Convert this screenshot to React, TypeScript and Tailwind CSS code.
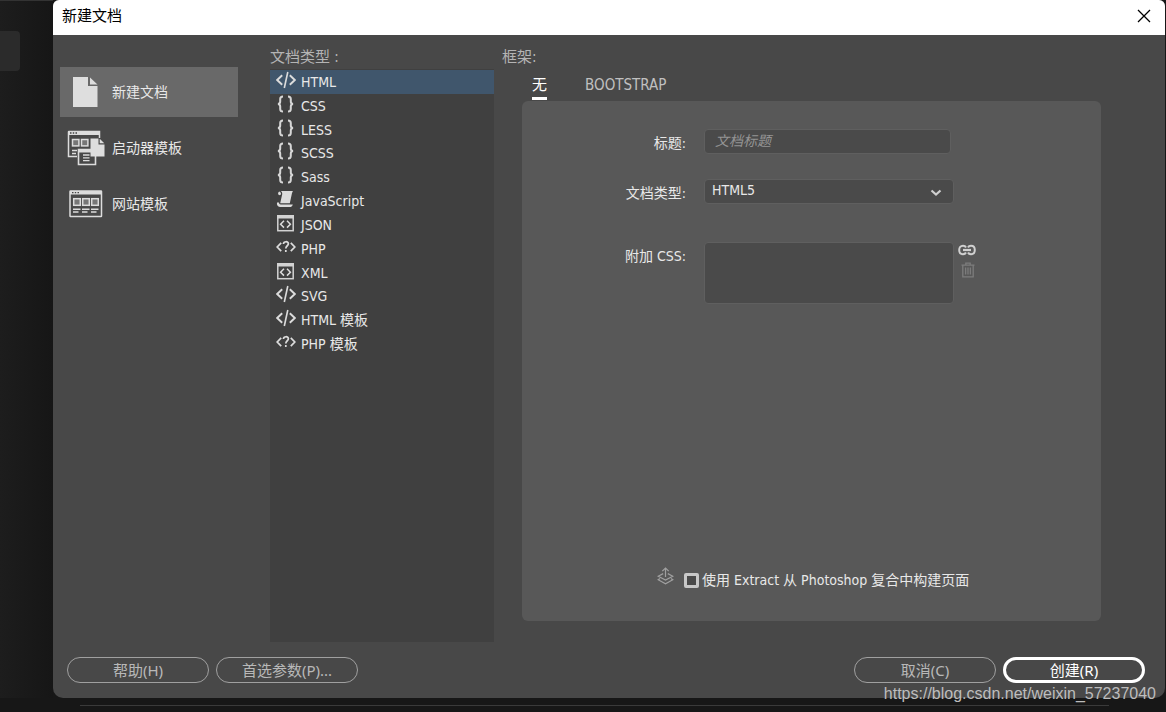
import React, { useState } from "react";

type IconProps = { className?: string };

const DocIcon = () => (
  <svg width="26" height="31" viewBox="0 0 26 31" fill="#dedede" aria-hidden="true">
    <path d="M0 0H15V9H24.5V30H0Z" />
    <path d="M17 0.5L24.5 7.5H17Z" />
  </svg>
);

const StarterIcon = () => (
  <svg width="38" height="36" viewBox="0 0 38 36" fill="none" aria-hidden="true">
    <path d="M1.5 1.5H32.5V8M1.5 1.5V26.5H10" stroke="#dcdcdc" strokeWidth="1.5" />
    <path d="M1 1H33V5H1Z" fill="#dcdcdc" />
    <path d="M3 3H4.5M5.8 3H7.2M8.5 3H10" stroke="#444" strokeWidth="1.4" />
    <rect x="5.5" y="9.5" width="6.4" height="6.4" fill="#777" stroke="#dcdcdc" strokeWidth="1.5" />
    <rect x="14.5" y="9.5" width="6.4" height="6.4" fill="#777" stroke="#dcdcdc" strokeWidth="1.5" />
    <path d="M5 20.5H10M5 23.5H9" stroke="#dcdcdc" strokeWidth="1.3" />
    <path d="M11.5 19.5H28.5V34.5H11.5Z" fill="#484848" stroke="#dcdcdc" strokeWidth="1.6" />
    <path d="M11 19H24V22.5H11Z" fill="#dcdcdc" />
    <path d="M16 25H22.5M16 27.8H22.5M16 30.6H22.5" stroke="#dcdcdc" strokeWidth="1.3" />
    <path d="M23.5 8.5H31.5V14.5H37.5V26.5H23.5Z" fill="#dedede" />
    <path d="M32.7 8.7L37.3 13.3H32.7Z" fill="#dedede" />
  </svg>
);

const SiteIcon = () => (
  <svg width="34" height="28" viewBox="0 0 34 28" fill="none" aria-hidden="true">
    <rect x="1" y="1" width="31.5" height="25.5" rx="0.5" stroke="#dcdcdc" strokeWidth="1.5" />
    <path d="M1 1H33V4.5H1Z" fill="#dcdcdc" />
    <path d="M3 2.6H4.5M5.8 2.6H7.2M8.5 2.6H10" stroke="#444" strokeWidth="1.4" />
    <g fill="#777" stroke="#dcdcdc" strokeWidth="1.5">
      <rect x="4.7" y="8.7" width="6.6" height="6.6" />
      <rect x="13.7" y="8.7" width="6.6" height="6.6" />
      <rect x="22.7" y="8.7" width="6.6" height="6.6" />
    </g>
    <path d="M4 19.2H11.5M13 19.2H20.5M22 19.2H29.5M4 22H9.5M13 22H18.5M22 22H27.5" stroke="#dcdcdc" strokeWidth="1.4" />
  </svg>
);

const TagIcon = () => (
  <svg width="20" height="18" viewBox="0 0 20 18" fill="none" stroke="#dcdcdc" strokeWidth="1.9" aria-hidden="true">
    <path d="M6.2 4.2L1.2 9L6.2 13.8M13.8 4.2L18.8 9L13.8 13.8" />
    <path d="M11.8 1L8.3 17" strokeWidth="1.6" />
  </svg>
);

const BraceIcon = () => (
  <svg width="20" height="18" viewBox="0 0 20 18" fill="none" stroke="#d6d6d6" strokeWidth="2" aria-hidden="true">
    <path d="M7 1.5C4.9 1.5 4.2 2 4.2 4V6.4C4.2 8 3.5 8.8 2 9C3.5 9.2 4.2 10 4.2 11.6V14C4.2 16 4.9 16.5 7 16.5" />
    <path d="M12 1.5C14.1 1.5 14.8 2 14.8 4V6.4C14.8 8 15.5 8.8 17 9C15.5 9.2 14.8 10 14.8 11.6V14C14.8 16 14.1 16.5 12 16.5" />
  </svg>
);

const ScriptIcon = () => (
  <svg width="20" height="18" viewBox="0 0 20 18" fill="#dcdcdc" aria-hidden="true">
    <path d="M4.6 1H17C16.2 2 16 3.2 15.7 4.5L13.8 13.2H4.2L6.2 4.2C6.4 2.8 5.8 1.6 4.6 1Z" />
    <path d="M3.2 1.4C1.6 2.4 1.8 4.4 3.2 5.2L5 4.6C5.2 3.2 4.6 1.8 3.2 1.4Z" />
    <path d="M1 12.6H3C3 13.9 3.6 14.4 4.8 14.4H16.8C16.2 16.2 15.2 17 13.6 17H4C1.6 17 0.6 15 1 12.6Z" />
  </svg>
);

const BoxIcon = () => (
  <svg width="20" height="18" viewBox="0 0 20 18" fill="none" aria-hidden="true">
    <rect x="1.8" y="1.8" width="15.4" height="14.9" stroke="#d2d2d2" strokeWidth="1.5" />
    <path d="M1 1H18V4.5H1Z" fill="#d2d2d2" />
    <path d="M8 6.8L4.6 10.2L8 13.6M11 6.8L14.4 10.2L11 13.6" stroke="#dcdcdc" strokeWidth="1.5" />
  </svg>
);

const PhpIcon = () => (
  <svg width="20" height="18" viewBox="0 0 20 18" fill="none" stroke="#dcdcdc" strokeWidth="1.7" aria-hidden="true">
    <path d="M5.2 4.8L1.2 9L5.2 13.2M14.8 4.8L18.8 9L14.8 13.2" />
    <path d="M7.4 6C7.6 3 12.4 3 12.4 5.8C12.4 7.8 9.8 7.8 9.8 10.6M9.8 12.1V14" />
  </svg>
);

const LinkIcon = () => (
  <svg width="18" height="12" viewBox="0 0 18 12" fill="none" stroke="#d0d0d0" strokeWidth="2" aria-hidden="true">
    <path d="M8 3.5C7.4 2.2 6.6 1.8 5 1.8C2.6 1.8 1.2 3.6 1.2 6C1.2 8.4 2.6 10.2 5 10.2C6.6 10.2 7.4 9.8 8 8.5M10 3.5C10.6 2.2 11.4 1.8 13 1.8C15.4 1.8 16.8 3.6 16.8 6C16.8 8.4 15.4 10.2 13 10.2C11.4 10.2 10.6 9.8 10 8.5" />
    <path d="M5 6H13" strokeWidth="2.2" />
  </svg>
);

const TrashIcon = () => (
  <svg width="14" height="16" viewBox="0 0 14 16" fill="none" stroke="#7c7c7c" strokeWidth="1.3" aria-hidden="true">
    <path d="M0.5 3.2H13.5M4.8 3V1.2H9.2V3M1.8 3.5V14.8H12.2V3.5M4.6 5.5V12.5M7 5.5V12.5M9.4 5.5V12.5" />
  </svg>
);

const ExtractIcon = () => (
  <svg width="17" height="18" viewBox="0 0 17 18" fill="none" stroke="#a0a0a0" strokeWidth="1.2" aria-hidden="true">
    <path d="M8.5 10V1.2M5.3 4.2L8.5 1L11.7 4.2" />
    <path d="M6.2 6.6L1.2 9.2L8.5 13L15.8 9.2L10.8 6.6M3 11.6L1.2 12.8L8.5 16.8L15.8 12.8L14 11.6" />
  </svg>
);

const sections: { name: string; Icon: React.FC<IconProps> }[] = [
  { name: "新建文档", Icon: DocIcon },
  { name: "启动器模板", Icon: StarterIcon },
  { name: "网站模板", Icon: SiteIcon },
];

const docTypes: { name: string; Icon: React.FC<IconProps> }[] = [
  { name: "HTML", Icon: TagIcon },
  { name: "CSS", Icon: BraceIcon },
  { name: "LESS", Icon: BraceIcon },
  { name: "SCSS", Icon: BraceIcon },
  { name: "Sass", Icon: BraceIcon },
  { name: "JavaScript", Icon: ScriptIcon },
  { name: "JSON", Icon: BoxIcon },
  { name: "PHP", Icon: PhpIcon },
  { name: "XML", Icon: BoxIcon },
  { name: "SVG", Icon: TagIcon },
  { name: "HTML 模板", Icon: TagIcon },
  { name: "PHP 模板", Icon: PhpIcon },
];

const pill = "flex h-[26px] w-[142px] items-center justify-center rounded-full text-[15px] leading-5 font-['Noto_Sans','Noto_Sans_CJK_SC',sans-serif]";

export default function App() {
  const [section, setSection] = useState(0);
  const [docType, setDocType] = useState(0);
  const [tab, setTab] = useState(0);

  return (
    <div className="relative flex min-h-screen flex-col bg-[#171717] pr-px font-['DejaVu_Sans_Condensed','Noto_Sans_CJK_SC',sans-serif] text-sm text-[#e8e8e8]">
      <div className="flex flex-1">
        <div className="w-[53px] shrink-0 border-t border-[#333] bg-linear-to-r from-[#1d1d1d] to-[#161616] pt-[30px]">
          <div className="h-10 w-5 rounded-r bg-[#2b2b2b]" />
        </div>

        <div className="flex min-w-0 flex-1 flex-col overflow-hidden rounded-t-md rounded-b-[10px] bg-[#484848]">
          <header className="flex h-[35px] shrink-0 items-center justify-between bg-white pr-3.5 pb-[3px] pl-[9px] text-black">
            <h1 className="text-[15px] leading-5">新建文档</h1>
            <button aria-label="关闭">
              <svg width="14" height="14" viewBox="0 0 14 14" stroke="#000" strokeWidth="1.3" aria-hidden="true">
                <path d="M1 1L13 13M13 1L1 13" />
              </svg>
            </button>
          </header>

          <main className="flex flex-1">
            <nav className="flex w-[217px] shrink-0 flex-col gap-1.5 pt-8 pr-8 pl-[7px]">
              {sections.map(({ name, Icon }, i) => (
                <button
                  key={name}
                  onClick={() => setSection(i)}
                  className={`flex h-[50px] items-center text-left ${i === section ? "bg-[#696969]" : ""}`}
                >
                  <span className="flex w-[52px] justify-center">
                    <Icon />
                  </span>
                  {name}
                </button>
              ))}
            </nav>

            <section className="flex w-[224px] shrink-0 flex-col pt-3">
              <h2 className="h-[22px] text-[15px] leading-5 text-[#b4b4b4]">文档类型 :</h2>
              <div className="flex-1 bg-[#404040] pt-px">
                <ul className="grid h-[286px] auto-rows-fr">
                  {docTypes.map(({ name, Icon }, i) => (
                    <li key={name} className="flex">
                      <button
                        onClick={() => setDocType(i)}
                        className={`flex w-full items-center pl-1.5 text-left ${i === docType ? "bg-[#40566c]" : ""}`}
                      >
                        <span className="pb-1">
                          <Icon />
                        </span>
                        <span className="pl-[5px] leading-5">{name}</span>
                      </button>
                    </li>
                  ))}
                </ul>
              </div>
            </section>

            <section className="flex min-w-0 flex-1 flex-col pt-3 pr-16 pb-[21px] pl-7">
              <h2 className="-ml-5 h-5 text-[15px] leading-5 text-[#b4b4b4]">框架:</h2>
              <div role="tablist" className="flex h-[34px] gap-[38px] pt-1.5 pl-2.5 text-[15px] leading-6">
                {["无", "BOOTSTRAP"].map((name, i) => (
                  <button
                    key={name}
                    role="tab"
                    aria-selected={i === tab}
                    onClick={() => setTab(i)}
                    className={`h-[27px] border-b-3 ${i === tab ? "border-white text-white" : "border-transparent text-[#c0c0c0]"}`}
                  >
                    {name}
                  </button>
                ))}
              </div>
              <div className="flex flex-1 flex-col justify-between rounded-md bg-[#585858] pt-7 pb-7">
                <div className="grid grid-cols-[164px_250px_auto] justify-start">
                  <label htmlFor="title" className="h-[50px] pt-1 text-right leading-5">
                    标题:
                  </label>
                  <input
                    id="title"
                    placeholder="文档标题"
                    className="ml-[18px] h-[25px] w-[247px] rounded border border-[#5f5f5f] bg-[#4a4a4a] px-2.5 pb-0.5 outline-none placeholder:text-[#949494] placeholder:italic"
                  />
                  <span />
                  <label htmlFor="doctype" className="h-[63px] pt-1 text-right leading-5">
                    文档类型:
                  </label>
                  <div className="relative ml-[18px] w-[250px]">
                    <select
                      id="doctype"
                      className="block h-[25px] w-full appearance-none rounded border border-[#5f5f5f] bg-[#4a4a4a] px-[7px] pb-1 outline-none"
                    >
                      <option>HTML5</option>
                    </select>
                    <svg className="pointer-events-none absolute top-2.5 right-3" width="12" height="8" viewBox="0 0 12 8" fill="none" stroke="#cfcfcf" strokeWidth="2.2" aria-hidden="true">
                      <path d="M1.5 1.5L6 5.5L10.5 1.5" />
                    </svg>
                  </div>
                  <span />
                  <label htmlFor="css" className="pt-1 text-right leading-5">
                    附加 CSS:
                  </label>
                  <textarea
                    id="css"
                    className="ml-[18px] h-[62px] w-[250px] resize-none rounded border border-[#5f5f5f] bg-[#4a4a4a] outline-none"
                  />
                  <div className="ml-[22px] flex flex-col items-end gap-1.5 pt-0.5">
                    <button aria-label="附加样式表">
                      <LinkIcon />
                    </button>
                    <button aria-label="删除" className="pr-px">
                      <TrashIcon />
                    </button>
                  </div>
                </div>
                <div className="flex items-center pl-[135px]">
                  <span className="pb-2">
                    <ExtractIcon />
                  </span>
                  <input
                    id="extract"
                    type="checkbox"
                    className="ml-2.5 size-[15px] appearance-none rounded-xs border-3 border-[#c8c8c8] bg-[#4a4a4a] checked:bg-[#c8c8c8]"
                  />
                  <label htmlFor="extract" className="pl-[3px] leading-5">
                    使用 Extract 从 Photoshop 复合中构建页面
                  </label>
                </div>
              </div>
            </section>
          </main>

          <footer className="flex justify-between pt-[15px] pr-5 pb-[15px] pl-3.5 text-[#b8b8b8]">
            <div className="flex gap-[7px]">
              <button className={`${pill} border border-[#a0a0a0]`}>帮助(H)</button>
              <button className={`${pill} border border-[#a0a0a0]`}>首选参数(P)...</button>
            </div>
            <div className="flex gap-[7px]">
              <button className={`${pill} border border-[#a0a0a0]`}>取消(C)</button>
              <button className={`${pill} border-3 border-white text-white`}>创建(R)</button>
            </div>
          </footer>
        </div>
      </div>
      <div className="h-3.5 pt-[7px] pr-14 pl-20">
        <div className="h-px bg-[#3a3a3a]" />
      </div>
      <p className="pointer-events-none absolute right-2.5 bottom-2 font-['Liberation_Sans',sans-serif] text-base leading-5 text-[#bdbdbd]">
        https://blog.csdn.net/weixin_57237040
      </p>
    </div>
  );
}
